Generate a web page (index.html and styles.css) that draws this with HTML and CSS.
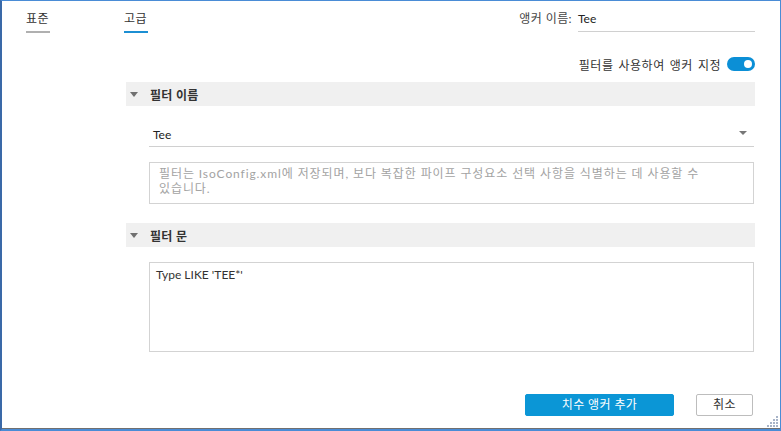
FILE: index.html
```html
<!DOCTYPE html>
<html lang="ko">
<head>
<meta charset="utf-8">
<link rel="stylesheet" href="styles.css">
</head>
<body>
<div class="frame">
  <div class="content">
    <div class="top-row">
      <div class="tabs">
        <div class="tab">표준</div>
        <div class="tab active">고급</div>
      </div>
      <div class="anchor-name">
        <span class="label">앵커 이름:</span>
        <div class="line-input">Tee</div>
      </div>
    </div>
    <div class="toggle-row">
      <span class="toggle-label">필터를 사용하여 앵커 지정</span>
      <span class="toggle"><span class="knob"></span></span>
    </div>
    <div class="sections">
      <div class="section-head"><span class="tri"></span>필터 이름</div>
      <div class="section-body">
        <div class="select">Tee<span class="caret"></span></div>
        <div class="desc">필터는 IsoConfig.xml에 저장되며, 보다 복잡한 파이프 구성요소 선택 사항을 식별하는 데 사용할 수 있습니다.</div>
      </div>
      <div class="section-head"><span class="tri"></span>필터 문</div>
      <div class="section-body">
        <div class="statement">Type LIKE 'TEE*'</div>
      </div>
    </div>
    <div class="buttons">
      <button class="btn primary">치수 앵커 추가</button>
      <button class="btn secondary">취소</button>
    </div>
  </div>
  <svg class="grip" width="12" height="12" viewBox="0 0 12 12">
    <g fill="#a8b4c8">
      <rect x="9" y="0" width="2" height="2"/>
      <rect x="6" y="3" width="2" height="2"/><rect x="9" y="3" width="2" height="2"/>
      <rect x="3" y="6" width="2" height="2"/><rect x="6" y="6" width="2" height="2"/><rect x="9" y="6" width="2" height="2"/>
      <rect x="0" y="9" width="2" height="2"/><rect x="3" y="9" width="2" height="2"/><rect x="6" y="9" width="2" height="2"/><rect x="9" y="9" width="2" height="2"/>
    </g>
  </svg>
</div>
</body>
</html>
```

FILE: styles.css
```css
* { box-sizing: border-box; }
html, body { margin: 0; padding: 0; }
body {
  width: 781px;
  height: 431px;
  overflow: hidden;
  background: #ffffff;
  font-family: "Lato", "Noto Sans CJK KR", sans-serif;
  font-size: 12px;
  color: #333333;
}
.frame {
  position: relative;
  width: 781px;
  height: 431px;
  border-top: 1px solid #4a8cd6;
  border-left: 2px solid #3a69a8;
  border-right: 1px solid #4a8cd6;
  border-bottom: 2px solid #4a8cd6;
  box-shadow: inset 0 -1px 0 #707070;
}
.content {
  padding: 7px 25px 0 24px;
  display: flex;
  flex-direction: column;
}
.top-row {
  display: flex;
  justify-content: space-between;
  align-items: flex-start;
  height: 26px;
}
.tabs { display: flex; gap: 74px; }
.tab {
  width: 24px;
  line-height: 22px;
  height: 25px;
  border-bottom: 2px solid #b0b0b0;
  text-align: left;
  letter-spacing: 0.5px;
}
.tab.active { border-bottom-color: #1c8fd3; }
.anchor-name { display: flex; align-items: flex-start; gap: 6px; }
.anchor-name .label { line-height: 22px; color: #444; letter-spacing: 0.4px; }
.line-input {
  width: 177px;
  line-height: 22px;
  height: 24px;
  border-bottom: 1px solid #d0d0d0;
  color: #222;
}
.toggle-row {
  margin-top: 22px;
  display: flex;
  justify-content: flex-end;
  align-items: center;
  gap: 6px;
  height: 16px;
}
.toggle-label { letter-spacing: 0.5px; word-spacing: 1.5px; }
.toggle {
  width: 28px;
  height: 14px;
  border-radius: 7px;
  background: #0b8fd6;
  position: relative;
  display: inline-block;
}
.toggle .knob {
  position: absolute;
  right: 3px;
  top: 3px;
  width: 8px;
  height: 8px;
  border-radius: 50%;
  background: #ffffff;
}
.sections {
  margin-top: 10px;
  margin-left: 100px;
  display: flex;
  flex-direction: column;
}
.section-head {
  height: 24px;
  background: #f0f0f0;
  display: flex;
  align-items: center;
  font-weight: bold;
  color: #333;
  padding-left: 4px;
  letter-spacing: 0.3px;
}
.tri {
  width: 0; height: 0;
  border-left: 4px solid transparent;
  border-right: 4px solid transparent;
  border-top: 5px solid #707070;
  margin-right: 12px;
}
.section-body {
  padding: 15px 1px 19px 23px;
}
.select {
  position: relative;
  height: 26px;
  line-height: 22px;
  padding: 3px 0 0 4px;
  border-bottom: 1px solid #d0d0d0;
  color: #222;
}
.caret {
  position: absolute;
  right: 7px;
  top: 10px;
  border-left: 4px solid transparent;
  border-right: 4px solid transparent;
  border-top: 4px solid #777;
}
.desc {
  margin-top: 15px;
  height: 42px;
  border: 1px solid #d3d3d3;
  padding: 3px 40px 0 9px;
  line-height: 15px;
  color: #a3a3a3;
  word-break: keep-all;
  letter-spacing: 0.9px;
}
.statement {
  height: 90px;
  border: 1px solid #d3d3d3;
  padding: 4px 6px;
  line-height: 15px;
  color: #333;
}
.buttons {
  margin-top: 23px;
  display: flex;
  justify-content: flex-end;
  gap: 22px;
  padding-right: 2px;
}
.btn {
  font-family: "Lato", "Noto Sans CJK KR", sans-serif;
  font-size: 12px;
  height: 22px;
  border-radius: 2px;
  padding: 0;
  line-height: 20px;
  letter-spacing: 0.4px;
}
.btn.primary {
  width: 149px;
  background: #0b96d6;
  color: #ffffff;
  border: 1px solid #0b96d6;
}
.btn.secondary {
  width: 57px;
  background: #ffffff;
  color: #333;
  border: 1px solid #bdbdbd;
}
.grip {
  position: absolute;
  right: 1px;
  bottom: 1px;
}
```
